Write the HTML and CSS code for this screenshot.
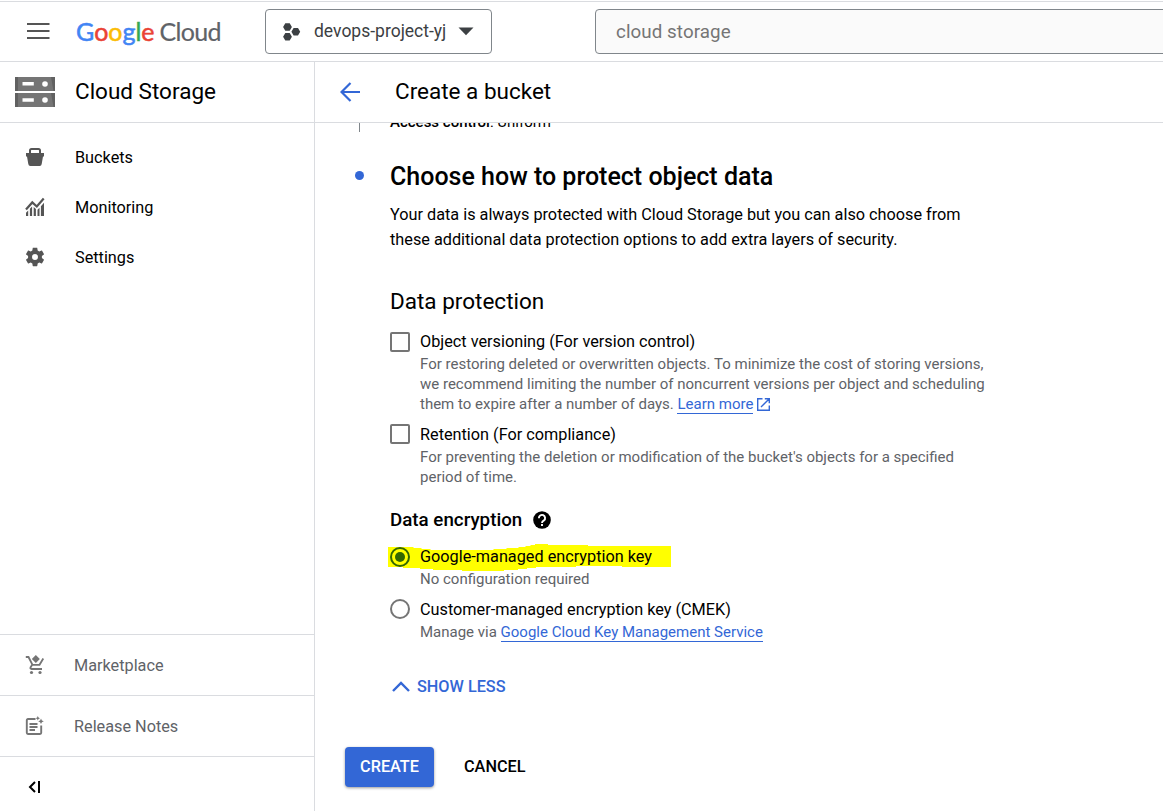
FILE: index.html
```html
<!DOCTYPE html>
<html lang="en">
<head>
<meta charset="utf-8">
<title>Create a bucket – Cloud Storage</title>
<link rel="stylesheet" href="styles.css">
</head>
<body>
<header class="topbar">
  <svg class="menu-icon" width="24" height="18" viewBox="0 0 24 18"><path d="M1 2h22.500M1 9h22.500M1 16h22.500" stroke="#555" stroke-width="2"/></svg>
  <div class="logo"><span class="logo-google"><span class="b">G</span><span class="r">o</span><span class="y">o</span><span class="b">g</span><span class="g">l</span><span class="r">e</span></span><span class="logo-cloud">Cloud</span></div>
  <button class="project">
    <svg width="18" height="20" viewBox="0 0 18 20" fill="#3c4043"><path d="M2.300 1.200h4.400l2.200 3.800-2.200 3.800H2.300L.1 5zM2.300 10.900h4.400l2.200 3.800-2.200 3.800H2.300L.1 14.700zM10.600 6h4.400l2.200 3.800-2.200 3.800h-4.400L8.400 9.800z"/></svg>
    <span class="project-name">devops-project-yj</span>
    <svg class="caret" width="16" height="9" viewBox="0 0 16 9"><path d="M.5.500h15L8 8.200z" fill="#3c4043"/></svg>
  </button>
  <div class="search">cloud storage</div>
</header>
<div class="shell">
  <aside class="sidebar">
    <div class="product">
      <svg width="40" height="31" viewBox="0 0 40 31"><path fill="#757575" d="M0 0h40v14H0zM0 16h40v14H0z"/><path fill="#616161" d="M0 0h3v14H0zM0 16h3v14H0zM36 0h4v14h-1.500zM36 16h4v14h-1.500z"/><path fill="#fff" d="M7.500 5h11.300v3.500H7.500zM7.500 21.300h11.300v3.500H7.500z"/><circle cx="30" cy="7" r="2.800" fill="#fff"/><circle cx="30" cy="23" r="2.800" fill="#fff"/></svg>
      <span>Cloud Storage</span>
    </div>
    <nav class="nav">
      <a class="nav-item"><svg width="20" height="20" viewBox="0 0 20 20"><path fill="#555" fill-rule="evenodd" d="M1 6h3V3.500Q4 1 6.500 1h7Q16 1 16 3.500V6h3v3.500h-1L16.700 17q-.3 2-2 2H5.300q-1.700 0-2-2L2 9.500H1zM6 6h8V3.500Q14 3 13.500 3h-7Q6 3 6 3.500z"/></svg><span>Buckets</span></a>
      <a class="nav-item"><svg width="20" height="20" viewBox="0 0 20 20"><path fill="none" stroke="#555" stroke-width="2.200" d="M1 12.500 7.300 5.400l4.500 4.100L18.700 1.500"/><path fill="#555" d="M1 15.800l2.200-2.200V19H1zM4.900 11.800l2.200-2.300V19H4.900zM8.700 10l2.200 2V19H8.700zM12.500 12.800l2-2V19h-2zM15.900 9.200L19 5.800V19h-3.100z"/></svg><span>Monitoring</span></a>
      <a class="nav-item"><svg width="20" height="20" viewBox="1.200 1.200 21.600 21.600"><path fill="#555" d="M19.430 12.980c.04-.32.070-.64.070-.98s-.03-.66-.07-.98l2.110-1.650c.19-.15.240-.42.120-.64l-2-3.460c-.12-.22-.39-.3-.61-.22l-2.490 1c-.52-.4-1.080-.73-1.690-.98l-.38-2.650C14.460 2.180 14.250 2 14 2h-4c-.25 0-.46.180-.49.420l-.38 2.650c-.61.250-1.170.59-1.690.98l-2.490-1c-.23-.09-.49 0-.61.220l-2 3.460c-.13.220-.07.490.12.640l2.110 1.650c-.04.320-.07.650-.07.980s.03.660.07.980l-2.110 1.650c-.19.150-.24.420-.12.640l2 3.460c.12.220.39.300.61.220l2.490-1c.52.400 1.080.730 1.690.980l.38 2.650c.03.240.24.420.49.420h4c.25 0 .46-.18.490-.42l.38-2.650c.61-.25 1.170-.59 1.690-.98l2.490 1c.23.090.49 0 .61-.22l2-3.460c.12-.22.070-.49-.12-.64zM12 15.200a3.200 3.200 0 1 1 0-6.400 3.200 3.200 0 0 1 0 6.400z"/></svg><span>Settings</span></a>
    </nav>
    <div class="side-foot">
      <a class="foot-item"><svg width="20" height="20" viewBox="0 0 20 20"><path fill="none" stroke="#757575" stroke-width="1.800" d="M.8 2h2.700l4 7.800h7L18.300 3.500M7.200 9.800 5.500 12.500q-.5 1.500 1 1.500H17"/><path fill="#757575" d="m10.800 0 4 4-4 4-4-4z"/><circle cx="6.500" cy="17.500" r="1.600" fill="#757575"/><circle cx="15" cy="17.500" r="1.600" fill="#757575"/></svg><span>Marketplace</span></a>
      <a class="foot-item"><svg width="20" height="20" viewBox="0 0 20 20"><path fill="none" stroke="#757575" stroke-width="1.900" d="M10.500 3H3q-1.200 0-1.200 1.200v12.600Q1.800 18 3 18h12q1.200 0 1.200-1.200V9.500M4.500 8h8M4.500 11h8M4.500 14h5.500"/><path fill="#757575" d="m12.800 0 .7 1.500 1.500.7-1.500.7-.7 1.500-.7-1.500-1.500-.7 1.500-.7zM16 2.500l.9 1.900 1.900.9-1.900.9L16 8l-.9-1.800-1.900-.9 1.900-.9z"/></svg><span>Release Notes</span></a>
      <div class="collapse"><svg width="13" height="12" viewBox="0 0 13 12"><path fill="none" stroke="#000" stroke-width="2" d="M7 1 2 6l5 5M11 0v12"/></svg></div>
    </div>
  </aside>
  <main class="main">
    <div class="page-head">
      <svg width="20" height="20" viewBox="0 0 20 20"><path fill="none" stroke="#3367d6" stroke-width="2.200" d="M20 10H1.500M10.500 1l-9 9 9 9"/></svg>
      <h1>Create a bucket</h1>
    </div>
    <div class="content">
      <div class="prev-step"><span class="rail"></span><p><b>Access control</b>: Uniform</p></div>
      <div class="step-title"><span class="dot"></span><h2>Choose how to protect object data</h2></div>
      <div class="form">
        <p class="intro">Your data is always protected with Cloud Storage but you can also choose from<br>these additional data protection options to add extra layers of security.</p>
        <h3>Data protection</h3>
        <div class="option versioning"><span class="box"></span><div class="option-body">
          <div class="label">Object versioning (For version control)</div>
          <p class="hint">For restoring deleted or overwritten objects. To minimize the cost of storing versions,<br>we recommend limiting the number of noncurrent versions per object and scheduling<br>them to expire after a number of days. <a class="link">Learn more</a><svg class="ext" width="13" height="13" viewBox="0 0 13 13"><path fill="none" stroke="#3367d6" stroke-width="1.400" d="M5.500.7H.7v11.600h11.600V7.500M7.800.7h4.500v4.500M12.300.700 4 9"/></svg></p>
        </div></div>
        <div class="option retention"><span class="box"></span><div class="option-body">
          <div class="label">Retention (For compliance)</div>
          <p class="hint">For preventing the deletion or modification of the bucket's objects for a specified<br>period of time.</p>
        </div></div>
        <h4><span>Data encryption</span><svg width="18" height="18" viewBox="0 0 18 18"><circle cx="9" cy="9" r="8.800"/><path fill="none" stroke="#fff" stroke-width="1.900" d="M5.900 7.200A3.100 3.100 0 1 1 11 9.400Q9 10.500 9 12"/><path fill="#fff" d="M8.050 13h1.900v1.900h-1.900z"/></svg></h4>
        <div class="option google-key">
          <svg class="marker" width="284" height="28" viewBox="0 0 284 28"><path fill="#ff0" d="M0 3h25l1 1h7l1 1h8l1 1h62l1-1h12l1-1h11l1-1h6l1-1h4l1-1h4V0h13v1h40v1h83v21h-49v-1h-46v1h-40v1h-9v1h-9v1h-14v1H74v-1H45v-1H32v-1H15v-1H0z"/></svg>
          <span class="radio checked"></span><div class="option-body">
          <div class="label">Google-managed encryption key</div>
          <p class="hint">No configuration required</p>
        </div></div>
        <div class="option customer-key"><span class="radio"></span><div class="option-body">
          <div class="label">Customer-managed encryption key (CMEK)</div>
          <p class="hint">Manage via <a class="link">Google Cloud Key Management Service</a></p>
        </div></div>
        <div class="less"><svg width="18" height="11" viewBox="0 0 18 11"><path fill="none" stroke="#3367d6" stroke-width="2.400" d="m1 10 8-8 8 8"/></svg><span>SHOW LESS</span></div>
      </div>
      <div class="actions"><button class="create">CREATE</button><button class="cancel">CANCEL</button></div>
    </div>
  </main>
</div>
</body>
</html>
```
FILE: styles.css
```css
* { box-sizing: border-box; }
body { margin: 0; width: 1163px; height: 811px; overflow: hidden; display: flex; flex-direction: column; background: #fff; color: #000; font-family: Roboto, sans-serif; font-size: 16.25px; }
h1, h2, h3, h4, p { margin: 0; font-weight: 400; }
b { font-weight: 500; }
button { font: inherit; color: inherit; background: none; border: 0; padding: 0; }
svg { display: block; flex: none; }

/* Top bar */
.topbar { height: 61px; flex: none; margin-top: 1px; border-top: 1px solid #dadce0; border-bottom: 1px solid #dadce0; display: flex; align-items: flex-start; }
.menu-icon { margin: 20px 0 0 26px; }
.logo { margin-left: 26px; width: 189px; padding-top: 11px; display: flex; gap: 5px; font-family: Lato, sans-serif; font-size: 25px; line-height: 36px; }
.logo-google { -webkit-text-stroke: .5px; }
.logo-cloud { color: #5f6368; letter-spacing: -.7px; -webkit-text-stroke: .2px; }
.b { color: #4285f4; }
.r { color: #ea4335; }
.y { color: #fbbc05; }
.g { color: #34a853; }
.project { width: 227px; height: 45px; margin-top: 7px; border: 1px solid #80868b; border-radius: 4px; display: flex; align-items: center; padding-left: 17px; color: #3c4043; font-size: 17.5px; }
.project-name { margin: 0 12px 2px 13px; }
.search { margin: 7px -6px 0 103px; flex: 1; height: 45px; border: 1px solid #80868b; border-radius: 4px; background: #fafafa; color: #757575; font-size: 18.75px; letter-spacing: .08px; line-height: 44px; padding-left: 20px; }

/* Side navigation */
.shell { display: flex; flex: 1; min-height: 0; }
.sidebar { width: 315px; border-right: 1px solid #dadce0; display: flex; flex-direction: column; }
.product { height: 61px; border-bottom: 1px solid #dadce0; display: flex; align-items: center; gap: 20px; padding-left: 15px; font-size: 22.5px; }
.product span { margin-bottom: 2px; }
.nav { padding-top: 9px; flex: 1; }
.nav-item { height: 50px; display: flex; align-items: center; gap: 30px; padding-left: 25px; }
.foot-item { height: 61px; border-top: 1px solid #dadce0; display: flex; align-items: center; gap: 29px; padding-left: 25px; color: #5f6368; }
.collapse { height: 55px; border-top: 1px solid #dadce0; padding: 24px 0 0 28px; }

/* Page header */
.main { flex: 1; display: flex; flex-direction: column; }
.page-head { height: 61px; flex: none; border-bottom: 1px solid #dadce0; display: flex; align-items: center; gap: 35px; padding-left: 25px; }
h1 { font-size: 22.5px; margin-bottom: 2px; }

/* Step content */
.content { flex: 1; overflow: hidden; padding-left: 30px; }
.prev-step { height: 35px; display: flex; gap: 30px; padding-left: 14px; }
.rail { width: 1px; height: 9px; background: #80868b; }
.prev-step p { margin-top: -11px; font-size: 15px; line-height: 20px; }
.step-title { display: flex; align-items: center; height: 38px; padding-left: 10px; gap: 26px; }
.dot { width: 9px; height: 9px; border-radius: 50%; background: #3367d6; margin-top: -3px; }
h2 { font-size: 25px; font-weight: 500; margin-bottom: 2px; }
.form { padding-left: 45px; }
.intro { margin-top: 6px; line-height: 25px; }
h3 { font-size: 22.5px; line-height: 30px; margin-top: 34px; }
.option { display: flex; gap: 10px; position: relative; }
.option-body { position: relative; }
.label { line-height: 25px; }
.hint { font-size: 15px; line-height: 20px; color: #5f6368; }
.versioning { margin-top: 13px; }
.retention { margin-top: 8px; }
.box { width: 20px; height: 20px; border: 2px solid #757575; border-radius: 2px; margin-top: 3px; }
.radio { width: 20px; height: 20px; border: 2px solid #757575; border-radius: 50%; margin-top: 3px; position: relative; display: grid; place-items: center; }
.retention .box, .customer-key .radio { margin-top: 2px; }
.radio.checked { border-color: #336700; }
.checked::after { content: ""; width: 10px; height: 10px; border-radius: 50%; background: #336700; }
.link { color: #3367d6; border-bottom: 1px solid #3367d6; }
.ext { display: inline-block; margin-left: 4px; vertical-align: -2px; }
h4 { display: flex; align-items: center; gap: 11px; font-size: 18.75px; font-weight: 500; line-height: 26px; margin-top: 20px; }
.google-key { margin-top: 11px; }
.marker { position: absolute; left: -2px; top: 0; }
.customer-key { margin-top: 8px; }
.less { display: flex; align-items: center; gap: 7px; margin: 32px 0 0 2px; height: 25px; color: #3367d6; font-weight: 500; }
.actions { display: flex; margin-top: 48px; gap: 30px; font-weight: 500; }
.actions button { padding-bottom: 2px; }
.create { width: 89px; height: 40px; background: #3367d6; color: #fff; border-radius: 4px; box-shadow: 0 1px 3px rgba(0,0,0,.4); }
```
